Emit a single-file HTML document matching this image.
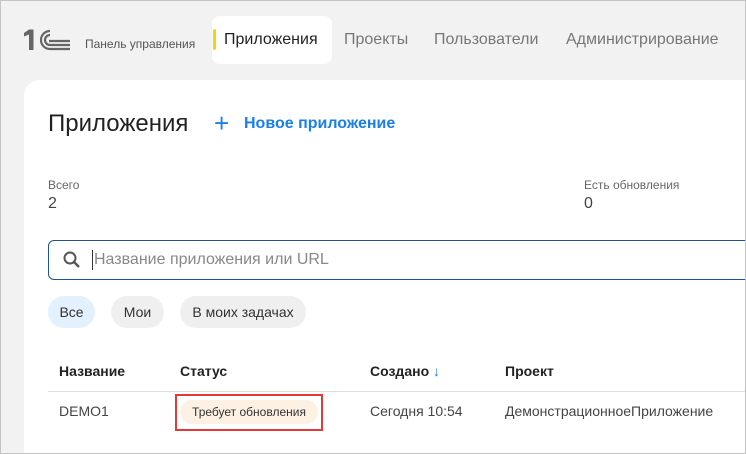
<!DOCTYPE html>
<html><head><meta charset="utf-8"><style>
*{margin:0;padding:0;box-sizing:border-box}
html{width:746px;height:454px;overflow:hidden}
body{width:746px;height:454px;overflow:hidden;background:#f2f2f2;font-family:"Liberation Sans",Arial,sans-serif;position:relative;color:#222}
.frame{position:absolute;left:0;top:0;width:746px;height:454px;border:1px solid #c4c4c4;pointer-events:none;z-index:10}
.a{position:absolute;white-space:nowrap}
.card{position:absolute;left:24px;top:80px;width:722px;height:374px;background:#fff;border-radius:16px 0 0 0}
.tab{position:absolute;left:212px;top:16px;width:120px;height:48px;background:#fff;border-radius:8px}
.bar{position:absolute;left:213px;top:29px;width:3px;height:21px;background:#f5d20f;border-radius:2px}
.nav{font-size:16px;color:#777;top:31px}
.chip{position:absolute;top:296px;height:32px;border-radius:16px;background:#efefef;font-size:14px;color:#333;line-height:32px;text-align:center}
.th{font-size:14px;font-weight:bold;color:#222;top:363px}
.td{font-size:14px;color:#444;top:403px}
</style></head><body>
<div class="frame"></div>
<svg class="a" style="left:24px;top:29px" width="46" height="22" viewBox="0 0 46 22">
<path d="M0 4 L5 0.5 L9.5 0.5 L9.5 21 L5 21 L5 5.5 L0 7.5 Z" fill="#666"/>
<g fill="none" stroke="#666" stroke-width="2.2">
<path d="M26 2 A9 9 0 1 0 26 20 L46 20"/>
<path d="M26 6 A5 5 0 1 0 26 16 L46 16"/>
<path d="M25 12 L46 12"/>
</g>
</svg>
<div class="a" style="left:85px;top:37px;font-size:12px;color:#555">Панель управления</div>
<div class="tab"></div><div class="bar"></div>
<div class="a nav" style="left:224px;color:#222">Приложения</div>
<div class="a nav" style="left:344px">Проекты</div>
<div class="a nav" style="left:434px">Пользователи</div>
<div class="a nav" style="left:566px">Администрирование</div>
<div class="card"></div>
<div class="a" style="left:48px;top:110px;font-size:24px;color:#222">Приложения</div>
<div class="a" style="left:214px;top:110px;font-size:26px;color:#1a7fe8;line-height:26px">+</div>
<div class="a" style="left:244px;top:115px;font-size:16px;font-weight:bold;color:#1a7fe8">Новое приложение</div>
<div class="a" style="left:48px;top:178px;font-size:12px;color:#666">Всего</div>
<div class="a" style="left:48px;top:195px;font-size:16px;color:#444">2</div>
<div class="a" style="left:584px;top:178px;font-size:12px;color:#666">Есть обновления</div>
<div class="a" style="left:584px;top:195px;font-size:16px;color:#444">0</div>
<div class="a" style="left:48px;top:240px;width:720px;height:40px;border:1px solid #1d5598;border-radius:6px"></div>
<svg class="a" style="left:62px;top:250px" width="20" height="20" viewBox="0 0 20 20"><circle cx="8" cy="8" r="5.5" fill="none" stroke="#555" stroke-width="2"/><path d="M12 12 L17 17" stroke="#555" stroke-width="2.4"/></svg>
<div class="a" style="left:92px;top:250px;width:1px;height:20px;background:#333"></div>
<div class="a" style="left:94px;top:251px;font-size:16px;color:#888">Название приложения или URL</div>
<div class="chip" style="left:48px;width:47px;background:#e3f0fd">Все</div>
<div class="chip" style="left:111px;width:53px">Мои</div>
<div class="chip" style="left:180px;width:126px">В моих задачах</div>
<div class="a th" style="left:59px">Название</div>
<div class="a th" style="left:180px">Статус</div>
<div class="a th" style="left:370px">Создано <span style="color:#1a7fe8">↓</span></div>
<div class="a th" style="left:505px">Проект</div>
<div class="a" style="left:48px;top:391px;width:700px;height:1px;background:#ddd"></div>
<div class="a td" style="left:59px">DEMO1</div>
<div class="a" style="left:175px;top:394px;width:148px;height:37px;border:2px solid #e53935"></div>
<div class="a" style="left:180px;top:400px;width:138px;height:24px;border-radius:12px;background:#fdf1e3;font-size:12px;color:#333;line-height:24px;text-align:center">Требует обновления</div>
<div class="a td" style="left:370px">Сегодня 10:54</div>
<div class="a td" style="left:505px">ДемонстрационноеПриложение</div>
</body></html>
